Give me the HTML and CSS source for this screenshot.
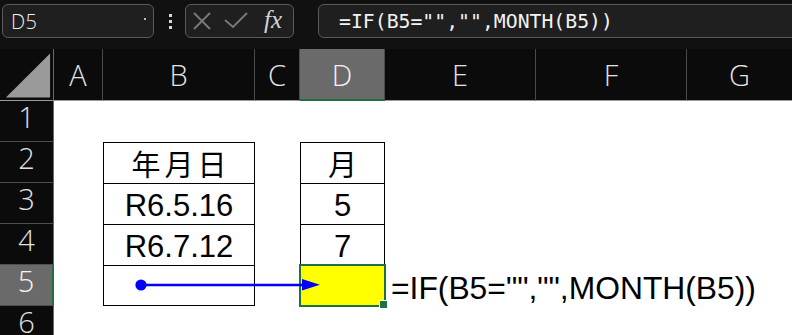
FILE: index.html
```html
<!DOCTYPE html>
<html lang="ja">
<head>
<meta charset="utf-8">
<title>Excel</title>
<link rel="stylesheet" href="styles.css">
</head>
<body>
<div class="topbar">
  <div class="namebox"><span class="nb-text">D5</span><span class="nb-dot"></span></div>
  <div class="vdots"><span></span><span></span><span></span></div>
  <div class="btnbox">
    <svg class="ico" width="20" height="20" viewBox="0 0 20 20"><path d="M2 2 L18 18 M18 2 L2 18" stroke="#7a7a7a" stroke-width="1.8" fill="none"/></svg>
    <svg class="ico" width="24" height="20" viewBox="0 0 24 20"><path d="M1 9 L9 16 L23 2" stroke="#7a7a7a" stroke-width="1.8" fill="none"/></svg>
    <span class="fx">fx</span>
  </div>
  <div class="formulabox"><span class="ftext">=IF(B5="","",MONTH(B5))</span></div>
</div>
<div class="sheet">
  <div class="hd corner"><svg width="54" height="52" viewBox="0 0 54 52"><polygon points="6,49 51,4 51,49" fill="#9a9a9a"/></svg></div>
  <div class="hd col">A</div>
  <div class="hd col">B</div>
  <div class="hd col">C</div>
  <div class="hd col sel">D</div>
  <div class="hd col">E</div>
  <div class="hd col">F</div>
  <div class="hd col last">G</div>

  <div class="rh">1</div><div class="c"></div><div class="c"></div><div class="c"></div><div class="c"></div><div class="c"></div><div class="c"></div><div class="c"></div>

  <div class="rh">2</div><div class="c"></div><div class="c t jp">年月日</div><div class="c"></div><div class="c t jp1">月</div><div class="c"></div><div class="c"></div><div class="c"></div>

  <div class="rh">3</div><div class="c"></div><div class="c t v">R6.5.16</div><div class="c"></div><div class="c t v">5</div><div class="c"></div><div class="c"></div><div class="c"></div>

  <div class="rh">4</div><div class="c"></div><div class="c t v">R6.7.12</div><div class="c"></div><div class="c t v">7</div><div class="c"></div><div class="c"></div><div class="c"></div>

  <div class="rh rsel">5</div><div class="c"></div><div class="c t tb"></div><div class="c"></div><div class="c t tb active"><span class="handle"></span></div><div class="c note">=IF(B5="","",MONTH(B5))</div><div class="c"></div><div class="c"></div>

  <div class="rh">6</div><div class="c"></div><div class="c"></div><div class="c"></div><div class="c"></div><div class="c"></div><div class="c"></div><div class="c"></div>
</div>
<svg class="arrow" width="792" height="335" viewBox="0 0 792 335">
  <line x1="141" y1="285" x2="304" y2="285" stroke="#0000ff" stroke-width="2.4"/>
  <circle cx="141" cy="285" r="5.6" fill="#0000ff"/>
  <polygon points="302,279 320,284.8 302,290.5" fill="#0000ff"/>
</svg>
</body>
</html>
```
FILE: styles.css
```css
* { box-sizing: border-box; }
html, body { margin: 0; padding: 0; }
body {
  width: 792px;
  height: 335px;
  overflow: hidden;
  background: #0b0b0b;
  position: relative;
  font-family: "Liberation Sans", Arial, sans-serif;
}
.topbar {
  height: 49px;
  background: #111111;
  display: flex;
  align-items: flex-start;
  padding-top: 4px;
  padding-left: 2px;
}
.namebox {
  width: 152px;
  height: 34px;
  border: 1px solid #5a5a5a;
  border-radius: 6px;
  background: #1f1f1f;
  display: flex;
  align-items: center;
  justify-content: space-between;
  padding: 0 7px 0 8px;
}
.nb-text {
  color: #f0f0f0;
  font-family: "Open Sans", "Noto Sans", sans-serif;
  font-weight: 300;
  font-size: 20px;
  letter-spacing: 0.5px;
}
.nb-dot {
  width: 2px;
  height: 2px;
  background: #bbb;
  margin-top: -4px;
}
.vdots {
  width: 30px;
  height: 34px;
  display: flex;
  flex-direction: column;
  align-items: center;
  justify-content: center;
  gap: 3px;
  margin-left: 1px;
}
.vdots span {
  width: 3px;
  height: 3px;
  background: #d8d8d8;
}
.btnbox {
  width: 109px;
  height: 34px;
  border: 1px solid #5a5a5a;
  border-radius: 6px;
  background: #1f1f1f;
  display: flex;
  align-items: center;
  padding-left: 6px;
  gap: 12px;
}
.ico { display: block; }
.fx {
  font-family: "Liberation Serif", "Times New Roman", serif;
  font-style: italic;
  font-size: 25px;
  color: #d4d4d4;
  margin-left: 4px;
  margin-top: -3px;
}
.formulabox {
  flex: 1;
  margin-left: 24px;
  margin-right: -20px;
  height: 34px;
  border: 1px solid #5a5a5a;
  border-radius: 6px;
  background: #1f1f1f;
  display: flex;
  align-items: center;
  padding-left: 20px;
}
.ftext {
  font-family: "DejaVu Sans Mono", "Liberation Mono", monospace;
  font-size: 19.8px;
  color: #f2f2f2;
  white-space: pre;
}
.sheet {
  display: grid;
  grid-template-columns: 54px 49px 152px 45px 85px 151px 151px 105px;
  grid-template-rows: 52px repeat(6, 41px);
  background: #ffffff;
}
.hd {
  background: #0b0b0b;
  color: #e4e4e4;
  font-family: "Open Sans", "Noto Sans", sans-serif;
  font-weight: 300;
  font-size: 29px;
  display: flex;
  align-items: center;
  justify-content: center;
  border-right: 1px solid #4a4a4a;
  border-bottom: 1px solid #9a9a9a;
  padding-top: 0;
}
.hd.corner {
  padding: 0;
  align-items: stretch;
  justify-content: stretch;
  border-right: 1px solid #6a6a6a;
}
.hd.corner svg { display: block; }
.hd.last { border-right: none; }
.hd.sel {
  background: #6a6a6a;
  color: #f4f4f4;
  border-bottom: 2px solid #1e7145;
}
.rh {
  background: #0b0b0b;
  color: #e0e0e0;
  font-family: "Open Sans", "Noto Sans", sans-serif;
  font-weight: 300;
  font-size: 29px;
  display: flex;
  align-items: flex-start;
  justify-content: center;
  padding-top: 1px;
  border-bottom: 1px solid #4e4e4e;
  border-right: 1px solid #6a6a6a;
  line-height: 1;
}
.rh.rsel {
  background: #6a6a6a;
  color: #f4f4f4;
  border-right: 2px solid #1e7145;
}
.c {
  background: #ffffff;
  position: relative;
}
.t {
  border-top: 1px solid #000;
  border-left: 1px solid #000;
  border-right: 1px solid #000;
  display: flex;
  align-items: center;
  justify-content: center;
  color: #000;
}
.tb { border-bottom: 1px solid #000; }
.jp {
  font-family: "Noto Sans CJK JP", sans-serif;
  font-size: 29px;
  font-weight: 400;
  letter-spacing: 4px;
  padding-left: 4px;
}
.jp1 {
  font-family: "Noto Sans CJK JP", sans-serif;
  font-size: 29px;
  font-weight: 400;
}
.v {
  font-size: 31px;
  line-height: 1;
  padding-top: 2px;
}
.active {
  background: #ffff00;
  outline: 2px solid #1e7145;
  outline-offset: -1px;
  z-index: 2;
}
.handle {
  position: absolute;
  right: -3px;
  bottom: -3px;
  width: 7px;
  height: 7px;
  background: #1e7145;
  box-shadow: 0 0 0 1px #ffffff;
}
.note {
  display: flex;
  align-items: flex-end;
  padding-left: 6px;
  padding-bottom: 1px;
  font-size: 31.8px;
  line-height: 1;
  color: #000;
  white-space: nowrap;
  overflow: visible;
  z-index: 1;
}
.arrow {
  position: absolute;
  left: 0;
  top: 0;
  pointer-events: none;
  z-index: 5;
}
```
